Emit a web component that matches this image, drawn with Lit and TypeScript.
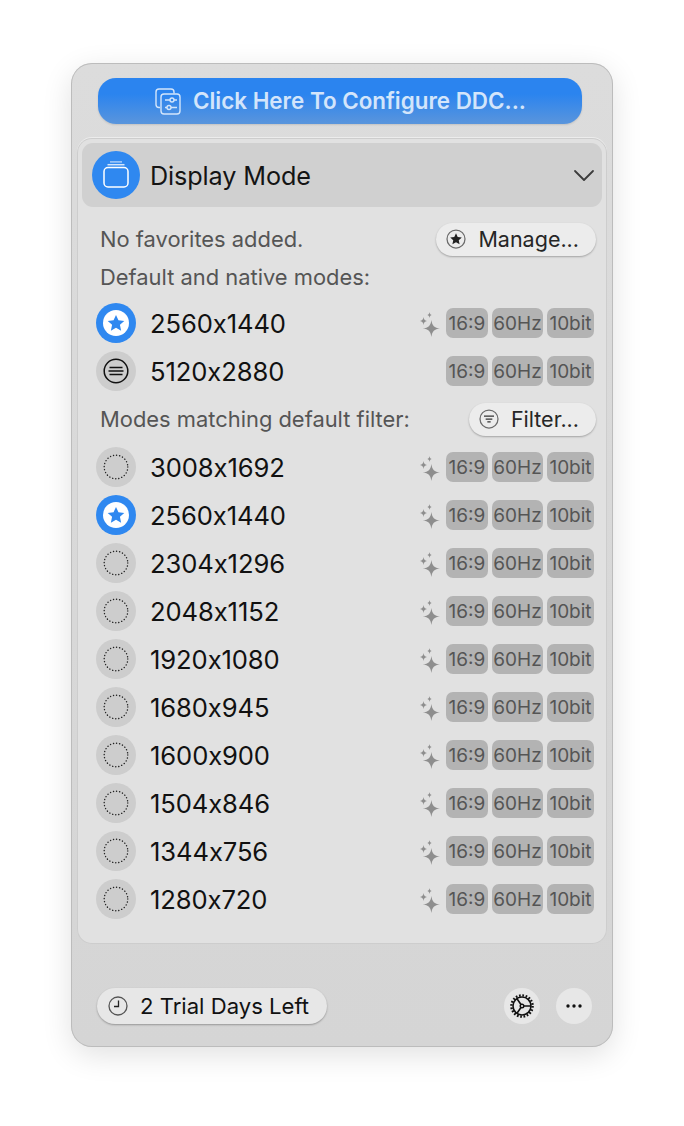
import { LitElement, html, css } from "lit";
import { customElement } from "lit/decorators.js";

const star = "M12 5.2l2.05 4.5 4.9.55-3.65 3.3 1 4.85L12 15.95 7.7 18.4l1-4.85-3.65-3.3 4.9-.55z";

const sparkle = html`<svg class="sparkle" width="24" height="26" viewBox="0 0 24 26" fill="#8e8e8e">
  <path d="M12.400 9c.8 5.800 2.900 7.900 8.600 8.500-5.700.6-7.800 2.700-8.600 8.500-.8-5.800-2.900-7.900-8.600-8.500 5.700-.6 7.800-2.700 8.600-8.500z"/>
  <path d="M4.500 6c.4 2.700 1.200 3.600 3.500 4-2.300.4-3.100 1.300-3.500 4-.4-2.700-1.200-3.600-3.500-4 2.300-.4 3.100-1.300 3.500-4z"/>
  <path d="M10.500 1c.3 2 .8 2.600 2.500 3-1.700.4-2.200 1-2.500 3-.3-2-.8-2.600-2.500-3 1.700-.4 2.200-1 2.500-3z"/>
</svg>`;

type Kind = "star" | "list" | "dots";

@customElement("app-root")
export class AppRoot extends LitElement {
  static styles = css`
    :host {
      display: block;
      padding: 63px 71px 79px;
      background: #fff;
      font-family: Inter, "Liberation Sans", sans-serif;
      color: #111;
    }
    .panel {
      width: 542px;
      height: 984px;
      box-sizing: border-box;
      border-radius: 21px;
      background: linear-gradient(#dcdcdc, #d5d5d5);
      box-shadow: 0 0 0 1px #bcbcbc inset, 0 8px 30px rgba(0, 0, 0, 0.12);
      padding: 15px 7px 0;
      display: flex;
      flex-direction: column;
    }
    .cta {
      margin-left: 20px;
      width: 484px;
      height: 46px;
      border-radius: 18px;
      background: linear-gradient(#2b84ef 35%, #5a95dc);
      display: flex;
      align-items: center;
      justify-content: center;
      gap: 11px;
      color: #d3e5fb;
      font-size: 22.400px;
      font-weight: 600;
      box-shadow: 0 1px 2px rgba(0, 0, 0, 0.12);
      flex: none;
    }
    .cta span {
      margin-top: -2px;
    }
    .inner {
      margin-top: 15px;
      height: 804px;
      box-sizing: border-box;
      background: #e1e1e1;
      border-radius: 14px;
      box-shadow: 0 0 0 1px #cdcdcd, 0 -1px 0 1px #ececec;
      padding: 4px;
      flex: none;
    }
    .head {
      height: 64px;
      border-radius: 11px;
      background: #d0d0d0;
      display: flex;
      align-items: center;
      padding: 0 7px 0 10px;
      font-size: 25.200px;
      letter-spacing: -0.1px;
      color: #141414;
    }
    .head .disc {
      width: 48px;
      height: 48px;
      border-radius: 50%;
      background: #2f88f0;
      display: grid;
      place-items: center;
      margin-right: 10px;
      flex: none;
    }
    .head .name {
      flex: 1;
      padding-top: 1px;
    }
    .line {
      height: 38px;
      padding: 0 6px 0 18px;
      display: flex;
      align-items: center;
      justify-content: space-between;
      font-size: 21.900px;
      color: #555;
    }
    .first {
      margin-top: 13px;
    }
    .before-rows {
      margin-bottom: 3px;
    }
    .line.filter {
      height: 48px;
    }
    .pill {
      display: flex;
      align-items: center;
      gap: 12px;
      height: 33px;
      box-sizing: border-box;
      padding: 0 17px 0 10px;
      border-radius: 17px;
      background: #ececec;
      box-shadow: 0 1px 2px rgba(0, 0, 0, 0.28);
      font-size: 21.500px;
      color: #262626;
    }
    .row {
      height: 48px;
      display: flex;
      align-items: center;
      padding: 0 8px 0 14px;
    }
    .row .ico {
      width: 40px;
      height: 40px;
      border-radius: 50%;
      background: #cdcdcd;
      display: grid;
      place-items: center;
      margin-right: 14px;
      flex: none;
    }
    .row .ico.on {
      background: #2f88f0;
    }
    .res {
      flex: 1;
      font-size: 25.600px;
      letter-spacing: -0.1px;
      color: #111;
    }
    .sparkle {
      margin-right: 3px;
      margin-top: 2px;
    }
    .tags {
      display: flex;
      gap: 4px;
    }
    .tag {
      height: 30px;
      border-radius: 7px;
      background: #b3b3b3;
      color: #555;
      font-size: 19px;
      display: grid;
      place-items: center;
    }
    .w1 { width: 42px; }
    .w2 { width: 51px; }
    .w3 { width: 47px; }
    .foot {
      margin-top: 45px;
      padding: 0 14px 0 19px;
      display: flex;
      align-items: center;
      gap: 16px;
    }
    .trial {
      width: 230px;
      height: 36px;
      box-sizing: border-box;
      padding: 0 0 0 11px;
      border-radius: 18px;
      background: #e7e7e7;
      box-shadow: 0 1px 2px rgba(0, 0, 0, 0.3);
      display: flex;
      align-items: center;
      gap: 12px;
      font-size: 22.100px;
      color: #111;
      margin-right: auto;
    }
    .round {
      width: 36px;
      height: 36px;
      border-radius: 50%;
      background: #e7e7e7;
      display: grid;
      place-items: center;
    }
  `;

  private icon(kind: Kind) {
    if (kind === "star") {
      return html`<div class="ico on"><svg width="26" height="26" viewBox="0 0 24 24">
        <circle cx="12" cy="12" r="12" fill="#fff"/><path d="${star}" fill="#2f88f0" transform="translate(-1.200 -1.200) scale(1.100)"/>
      </svg></div>`;
    }
    if (kind === "list") {
      return html`<div class="ico"><svg width="26" height="26" viewBox="0 0 26 26" fill="none" stroke="#111" stroke-width="1.500">
        <circle cx="13" cy="13" r="11.800"/><path d="M6.500 9.500h13M5.500 13h15M6.500 16.500h13"/>
      </svg></div>`;
    }
    return html`<div class="ico"><svg width="26" height="26" viewBox="0 0 26 26" fill="none" stroke="#222" stroke-width="1.400" stroke-linecap="round" stroke-dasharray="0.100 3">
      <circle cx="13" cy="13" r="11.800"/>
    </svg></div>`;
  }

  private row(res: string, kind: Kind, spark = true) {
    return html`<div class="row">
      ${this.icon(kind)}
      <div class="res">${res}</div>
      ${spark ? sparkle : ""}
      <div class="tags">
        <div class="tag w1">16:9</div>
        <div class="tag w2">60Hz</div>
        <div class="tag w3">10bit</div>
      </div>
    </div>`;
  }

  render() {
    const modes: [string, Kind][] = [
      ["3008x1692", "dots"],
      ["2560x1440", "star"],
      ["2304x1296", "dots"],
      ["2048x1152", "dots"],
      ["1920x1080", "dots"],
      ["1680x945", "dots"],
      ["1600x900", "dots"],
      ["1504x846", "dots"],
      ["1344x756", "dots"],
      ["1280x720", "dots"],
    ];
    return html`<div class="panel">
      <div class="cta">
        <svg width="28" height="28" viewBox="0 0 28 28" fill="none" stroke="#d3e5fb" stroke-width="1.400">
          <path d="M6 20.500H5a3 3 0 0 1-3-3V5a3 3 0 0 1 3-3h12a3 3 0 0 1 3 3v1.500"/>
          <rect x="7" y="7" width="19" height="20" rx="3"/>
          <path d="M11 13h5M20 13h3M11 20.500h2M17 20.500h6"/>
          <circle cx="18" cy="13" r="2"/><circle cx="15" cy="20.500" r="2"/>
        </svg>
        <span>Click Here To Configure DDC...</span>
      </div>
      <div class="inner">
        <div class="head">
          <div class="disc">
            <svg width="28" height="30" viewBox="0 0 28 30" fill="none" stroke="#fff" stroke-width="1.500">
              <rect x="2" y="7.500" width="24" height="19.500" rx="4"/>
              <path d="M5.500 4.700h17" stroke="#d5e6fb"/><path d="M8 1.900h12" stroke="#a9cdf8"/>
            </svg>
          </div>
          <div class="name">Display Mode</div>
          <svg width="22" height="14" viewBox="0 0 22 14" fill="none" stroke="#3c3c3c" stroke-width="1.800" stroke-linecap="round" stroke-linejoin="round">
            <path d="M2 3l9 9 9-9"/>
          </svg>
        </div>
        <div class="line first">
          <span>No favorites added.</span>
          <div class="pill">
            <svg width="20" height="20" viewBox="0 0 24 24">
              <circle cx="12" cy="12" r="10.800" fill="none" stroke="#6b6b6b" stroke-width="1.500"/>
              <path d="${star}" fill="#222"/>
            </svg>
            <span>Manage...</span>
          </div>
        </div>
        <div class="line before-rows"><span>Default and native modes:</span></div>
        ${this.row("2560x1440", "star")}
        ${this.row("5120x2880", "list", false)}
        <div class="line filter">
          <span>Modes matching default filter:</span>
          <div class="pill">
            <svg width="20" height="20" viewBox="0 0 24 24" fill="none" stroke="#6b6b6b" stroke-width="1.500">
              <circle cx="12" cy="12" r="10.800"/>
              <path d="M6 8.500h12M8 12h8M10 15.500h4" stroke="#333"/>
            </svg>
            <span>Filter...</span>
          </div>
        </div>
        ${modes.map(([r, k]) => this.row(r, k))}
      </div>
      <div class="foot">
        <div class="trial">
          <svg width="20" height="20" viewBox="0 0 20 20" fill="none" stroke="#555" stroke-width="1.300">
            <circle cx="10" cy="10" r="9"/><path d="M10.500 4.500v6H6" stroke="#222"/>
          </svg>
          <span>2 Trial Days Left</span>
        </div>
        <div class="round">
          <svg width="26" height="26" viewBox="0 0 26 26" fill="none" stroke="#111">
            <circle cx="13" cy="13" r="10.600" stroke-width="2.400" stroke-dasharray="1.700 1.630"/>
            <circle cx="13" cy="13" r="9" stroke-width="1.600"/>
            <circle cx="13" cy="13" r="1.800" stroke-width="1.400"/>
            <path d="M14.800 13H22M12 11.500L7.800 5.500M12 14.500L7.800 20.500" stroke-width="1.600"/>
          </svg>
        </div>
        <div class="round">
          <svg width="18" height="6" viewBox="0 0 18 6" fill="#111">
            <circle cx="3" cy="3" r="1.700"/><circle cx="9" cy="3" r="1.700"/><circle cx="15" cy="3" r="1.700"/>
          </svg>
        </div>
      </div>
    </div>`;
  }
}
